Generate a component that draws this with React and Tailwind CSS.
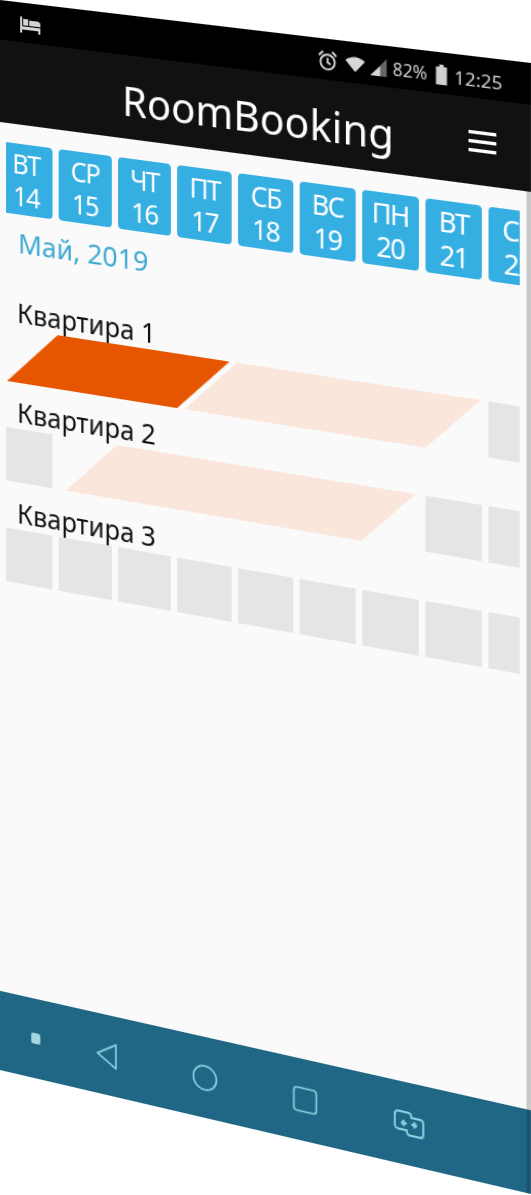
import React from 'react';

const days = [
    ['ВТ', '14'], ['СР', '15'], ['ЧТ', '16'], ['ПТ', '17'], ['СБ', '18'],
    ['ВС', '19'], ['ПН', '20'], ['ВТ', '21'], ['СР', '22'],
];

const Cell = () => <div className="w-[51.8px] h-[50px] shrink-0 bg-[#e5e5e5]" />;

function BedIcon() {
    return (
        <svg width="20" height="15" viewBox="0 0 20 15" fill="#d4d4d4">
            <path d="M0 0h2v9h18v6h-2v-3H2v3H0z" />
            <path d="M3 2h5v6H3z" />
            <path d="M9 3h8a3 3 0 0 1 3 3v2H9z" />
        </svg>
    );
}

function AlarmIcon() {
    return (
        <svg width="18" height="20" viewBox="0 0 19 20" fill="none" stroke="#cfcfcf" strokeWidth="2">
            <circle cx="9.5" cy="11" r="7" />
            <path d="M9.5 7v4.5l3 1.5M1 5l4-4M18 5l-4-4" />
        </svg>
    );
}

function WifiIcon() {
    return (
        <svg width="19" height="14" viewBox="0 0 18 14" fill="#d8d8d8">
            <path d="M0 4a13 13 0 0 1 18 0l-9 10z" />
        </svg>
    );
}

function SignalIcon() {
    return (
        <svg width="16" height="16" viewBox="0 0 15 16">
            <path d="M15 0v16H0z" fill="#666" />
            <path d="M9 7v9H0z" fill="#d8d8d8" />
        </svg>
    );
}

function BatteryIcon() {
    return (
        <svg width="11" height="18" viewBox="0 0 10 18" fill="#d0d0d0">
            <path d="M3 0h4v2h3v16H0V2h3z" />
        </svg>
    );
}

function NavIcons() {
    return (
        <div className="flex-1 flex items-center text-[#8ccfdf]">
            <div className="ml-[31px] w-[9px] h-[10px] rounded-[2px] bg-[#a5d6e0]" />
            <svg className="ml-[54px]" width="22" height="26" viewBox="0 0 22 26" fill="none" stroke="currentColor" strokeWidth="1.6" strokeLinejoin="round">
                <path d="M20 2v22L2 13z" />
            </svg>
            <svg className="ml-[71px]" width="25" height="25" viewBox="0 0 25 25" fill="none" stroke="currentColor" strokeWidth="1.6">
                <circle cx="12.5" cy="12.5" r="11" />
            </svg>
            <svg className="ml-[70px]" width="24" height="24" viewBox="0 0 24 24" fill="none" stroke="currentColor" strokeWidth="1.6">
                <rect x="1.5" y="1.5" width="21" height="21" rx="3" />
            </svg>
            <svg className="ml-[69px]" width="30" height="24" viewBox="0 0 30 24" fill="none" stroke="currentColor" strokeWidth="1.8" strokeLinejoin="round">
                <path d="M12 18H5a3 3 0 0 1-3-3V5a3 3 0 0 1 3-3h9a3 3 0 0 1 3 3v2" />
                <path d="M18 6h7a3 3 0 0 1 3 3v10a3 3 0 0 1-3 3h-9a3 3 0 0 1-3-3v-2" />
                <path d="M8 12h5M8 12l3-2.5M8 12l3 2.5M22 12h-5M22 12l-3-2.5M22 12l-3 2.5" />
            </svg>
        </div>
    );
}

export default function App() {
    return (
        <div className="w-[531px] h-[1195px] overflow-hidden bg-white [font-family:'Noto_Sans',Roboto,sans-serif]">
            {/* flat 500x1000 phone screen, tilted into the picture's perspective */}
            <div className="w-[500px] h-[1000px] origin-top-left flex flex-col blur-[0.4px] [transform:matrix3d(1.00472,0.1192,0,-0.00010786,0,1.07,0,0,0,0,1,0,0,0,0,1)]">
                {/* Status bar */}
                <div className="h-[37px] shrink-0 pt-[3px] bg-black flex items-center text-[#cfcfcf] text-[17px] leading-none">
                    <div className="ml-[20px] w-[286px]"><BedIcon /></div>
                    <AlarmIcon />
                    <div className="ml-[7px]"><WifiIcon /></div>
                    <div className="ml-[4px]"><SignalIcon /></div>
                    <span className="ml-[5px] w-[39px] text-[16px]">82%</span>
                    <BatteryIcon />
                    <span className="ml-[6px]">12:25</span>
                </div>

                {/* Header */}
                <div className="h-[77px] shrink-0 bg-[#111111] flex items-center">
                    <h1 className="ml-[120px] w-[324px] pt-[6px] text-[38.5px] leading-none font-normal text-white">RoomBooking</h1>
                    <div className="w-[25px] flex flex-col gap-[5px]">
                        <div className="h-[3px] bg-white" />
                        <div className="h-[3px] bg-white" />
                        <div className="h-[3px] bg-white" />
                    </div>
                </div>

                {/* Content */}
                <div className="flex-1 flex bg-[#fafafa]">
                    <div className="ml-[6px] w-[484px] overflow-hidden">
                        <div className="-ml-[6px] w-[530px] pt-[18px]">
                            <div className="flex gap-[6px]">
                                {days.map(([day, num], i) => (
                                    <div key={i} className="w-[51.8px] h-[66px] shrink-0 rounded-[4px] bg-[#35aee2] text-white text-[25px] leading-[30px] tracking-[-1.5px] font-normal text-center py-[3px]">
                                        <div>{day}</div>
                                        <div>{num}</div>
                                    </div>
                                ))}
                            </div>
                            <div className="ml-[18px] mt-[11px] h-[30px] text-[26px] leading-[30px] text-[#3fa9d0]">Май, 2019</div>

                            <div className="ml-[17px] mt-[34px] h-[32px] text-[25px] leading-[32px] text-[#111]">Квартира 1</div>
                            <div className="flex h-[50px]">
                                <div className="ml-[32.4px] w-[166px] shrink-0 -skew-x-[45deg] bg-[#e65600]" />
                                <div className="ml-[6.8px] w-[224.5px] shrink-0 -skew-x-[45deg] bg-[#fbe6dc]" />
                                <div className="ml-[32.7px]"><Cell /></div>
                            </div>

                            <div className="ml-[17px] mt-[11px] h-[32px] text-[25px] leading-[32px] text-[#111]">Квартира 2</div>
                            <div className="flex h-[50px]">
                                <Cell />
                                <div className="ml-[38px] w-[280.5px] shrink-0 -skew-x-[45deg] bg-[#fbe6dc]" />
                                <div className="ml-[34.3px] flex gap-[6px]"><Cell /><Cell /></div>
                            </div>

                            <div className="ml-[17px] mt-[12px] h-[32px] text-[25px] leading-[32px] text-[#111]">Квартира 3</div>
                            <div className="flex gap-[6px]">
                                {days.map((_, i) => <Cell key={i} />)}
                            </div>
                        </div>
                    </div>
                    <div className="ml-[6px] flex-1 bg-[#c9c9c9]" />
                </div>

                {/* Navigation bar */}
                <div className="h-[74px] shrink-0 flex bg-[#1f6785]">
                    <NavIcons />
                    <div className="w-[4px] bg-[#1a5570]" />
                </div>
            </div>
        </div>
    );
}
